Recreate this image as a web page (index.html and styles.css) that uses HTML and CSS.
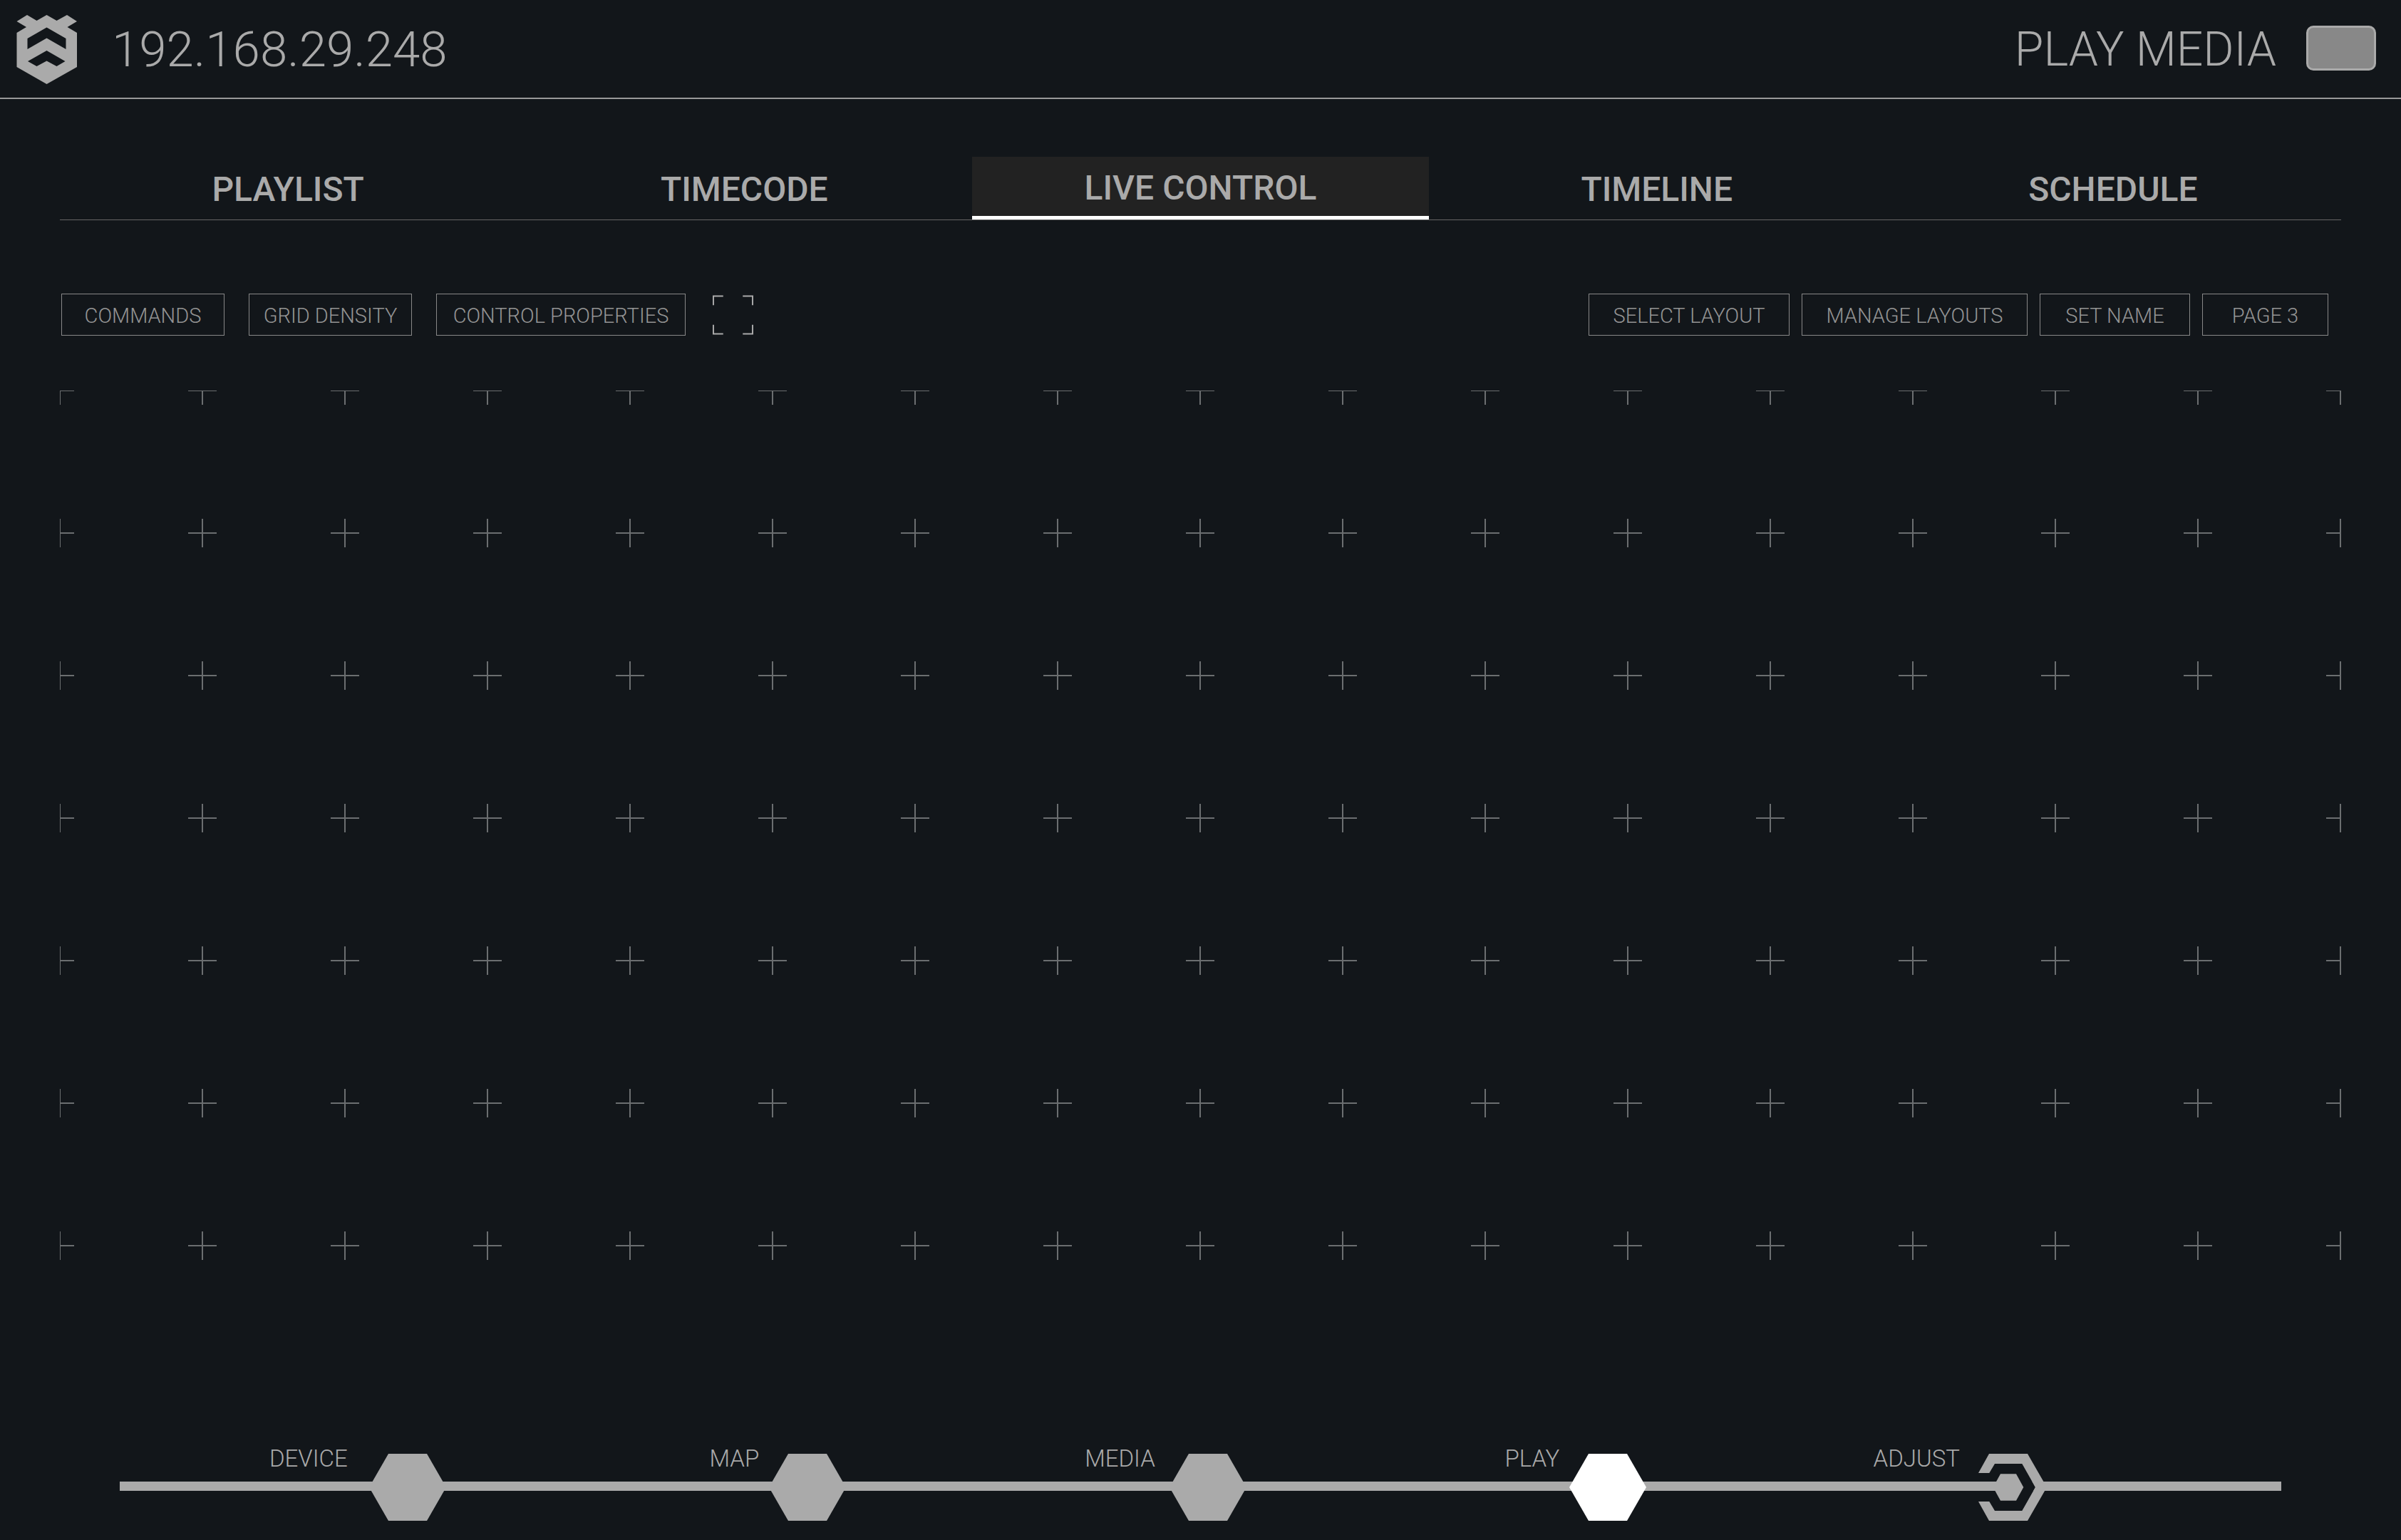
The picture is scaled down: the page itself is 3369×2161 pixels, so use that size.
FILE: index.html
```html
<!DOCTYPE html>
<html lang="en">
<head>
<meta charset="utf-8">
<title>Play Media</title>
<link rel="stylesheet" href="styles.css">
</head>
<body>
<header class="topbar">
  <div class="brand">
    <svg class="logo" viewBox="0 0 86 98" aria-hidden="true">
      <path fill-rule="evenodd" d="M0.5 9 15 0 28.500 8 42.500 0 56.500 8 71 0 85 9 71.500 17 85 25V73L42.500 97 0.500 73V25L14 17ZM42.500 17.500 15.500 33V48L42.500 32.500 69.500 48V33ZM42.500 50 16 65 28.500 72 42.500 64.500 56.500 72 68.500 65Z"/>
    </svg>
    <h1 class="address">192.168.29.248</h1>
  </div>
  <div class="status">
    <h2 class="title">PLAY MEDIA</h2>
    <button class="preview" type="button" aria-label="Preview"></button>
  </div>
</header>

<main class="content">
  <nav class="tabs">
    <a class="tab" href="#playlist">PLAYLIST</a>
    <a class="tab" href="#timecode">TIMECODE</a>
    <a class="tab tab--active" href="#live">LIVE CONTROL</a>
    <a class="tab" href="#timeline">TIMELINE</a>
    <a class="tab" href="#schedule">SCHEDULE</a>
  </nav>

  <div class="toolbar">
    <div class="tools tools--edit">
      <button class="btn btn--md" type="button">COMMANDS</button>
      <button class="btn btn--md" type="button">GRID DENSITY</button>
      <button class="btn btn--xxl" type="button">CONTROL PROPERTIES</button>
      <button class="expand" type="button" aria-label="Full screen">
        <svg viewBox="0 0 58 56" aria-hidden="true"><path d="M1 14V1H15M43 1H57V14M57 42V55H43M15 55H1V42"/></svg>
      </button>
    </div>
    <div class="tools tools--layout">
      <button class="btn btn--lg" type="button">SELECT LAYOUT</button>
      <button class="btn btn--xl" type="button">MANAGE LAYOUTS</button>
      <button class="btn btn--sm" type="button">SET NAME</button>
      <button class="btn btn--xs" type="button">PAGE 3</button>
    </div>
  </div>

  <svg class="board" aria-hidden="true">
    <defs>
      <pattern id="marks" x="-100" y="-100" width="200" height="200" patternUnits="userSpaceOnUse">
        <path d="M80 100H120M100 80V120" stroke="#6b6e70" stroke-width="2"/>
      </pattern>
    </defs>
    <rect width="100%" height="100%" fill="url(#marks)"/>
  </svg>
</main>

<nav class="steps">
  <a class="step step--wide" href="#device"><span class="label">DEVICE</span>
    <svg class="hex" viewBox="0 0 108 94" aria-hidden="true"><path d="M27 0H81L108 47 81 94H27L0 47Z"/></svg></a>
  <a class="step" href="#map"><span class="label">MAP</span>
    <svg class="hex" viewBox="0 0 108 94" aria-hidden="true"><path d="M27 0H81L108 47 81 94H27L0 47Z"/></svg></a>
  <a class="step step--mid" href="#media"><span class="label">MEDIA</span>
    <svg class="hex" viewBox="0 0 108 94" aria-hidden="true"><path d="M27 0H81L108 47 81 94H27L0 47Z"/></svg></a>
  <a class="step step--current" href="#play"><span class="label">PLAY</span>
    <svg class="hex" viewBox="0 0 108 94" aria-hidden="true"><path d="M27 0H81L108 47 81 94H27L0 47Z"/></svg></a>
  <a class="step" href="#adjust"><span class="label">ADJUST</span>
    <svg class="hex" viewBox="0 0 108 94" aria-hidden="true">
      <path class="hex-gap" d="M54 14H73.300L92 47 73.300 80H54Z"/>
      <path d="M12 27 27 0H81L108 47 81 94H27L12 67H27.300L35 80H73.300L92 47 73.300 14H35L27.300 27Z"/>
      <path d="M43 28.300H65L75.300 47 65 65.700H43L32.700 47Z"/>
    </svg></a>
</nav>
</body>
</html>
```
FILE: styles.css
```css
* {
  box-sizing: border-box;
}

body {
  margin: 0;
  min-height: 100vh;
  display: flex;
  flex-direction: column;
  background: #12161a;
  color: #aaa;
  font-family: Roboto, "Open Sans", sans-serif;
  font-weight: 300;
}

a {
  color: inherit;
  text-decoration: none;
}

button {
  margin: 0;
  padding: 0;
  background: none;
  font: inherit;
  cursor: pointer;
}

/* Top bar */
.topbar {
  display: flex;
  justify-content: space-between;
  height: 139px;
  padding: 0 35px 0 23px;
  border-bottom: 2px solid #999;
}

.brand,
.status {
  display: flex;
  align-items: center;
}

.brand {
  gap: 48px;
  padding-top: 3px;
}

.status {
  gap: 42px;
  padding-bottom: 3px;
}

.logo {
  width: 86px;
  height: 98px;
  fill: #aaa;
}

.address,
.title {
  margin: 0;
  font-size: 69px;
  font-weight: 300;
  line-height: 80px;
}

.title {
  padding-top: 5px;
  font-size: 66px;
}

.preview {
  width: 98px;
  height: 63px;
  border: 3px solid #aaa;
  border-radius: 10px;
  background: #888;
}

/* Tabs */
.content {
  padding: 81px 84px 0;
}

.tabs {
  display: grid;
  grid-template-columns: repeat(5, 1fr);
  border-bottom: 1px solid #666;
}

.tab {
  height: 88px;
  padding-top: 5px;
  font-size: 48px;
  font-weight: 500;
  line-height: 82px;
  text-align: center;
}

.tab--active {
  padding-top: 3px;
  border-bottom: 5px solid #fff;
  background: #222;
}

/* Toolbar */
.toolbar {
  display: flex;
  justify-content: space-between;
  align-items: center;
  margin-top: 103px;
  padding: 0 18px 0 2px;
}

.tools {
  display: flex;
  align-items: center;
}

.tools--edit {
  gap: 34px;
}

.tools--layout {
  gap: 17px;
}

.btn {
  height: 59px;
  padding-top: 2px;
  border: 1px solid #888;
  color: #949494;
  font-size: 29px;
  line-height: 54px;
  white-space: nowrap;
}

.btn--xs { width: 177px; }
.btn--sm { width: 211px; }
.btn--md { width: 229px; }
.btn--lg { width: 282px; }
.btn--xl { width: 317px; }
.btn--xxl { width: 350px; }

.expand {
  display: flex;
  margin-left: 4px;
  border: 0;
}

.expand svg {
  width: 57px;
  height: 56px;
  fill: none;
  stroke: #aaa;
  stroke-width: 2;
}

/* Placement board */
.board {
  display: block;
  width: 100%;
  height: 1222px;
  margin-top: 77px;
}

/* Step navigation */
.steps {
  display: grid;
  grid-template-columns: 458fr repeat(4, 562fr);
  height: 121px;
  margin: auto 168px 0;
  padding-right: 329px;
  background: linear-gradient(#aaa, #aaa) 0 39px / 100% 13px no-repeat;
}

.step {
  display: flex;
  justify-content: flex-end;
  align-items: flex-start;
  gap: 14px;
}

.step--mid { gap: 20px; }
.step--wide { gap: 30px; }

.label {
  font-size: 33px;
  line-height: 14px;
}

.hex {
  width: 108px;
  height: 94px;
  fill: #aaa;
}

.step--current .hex {
  fill: #fff;
}

.hex-gap {
  fill: #12161a;
}
```
